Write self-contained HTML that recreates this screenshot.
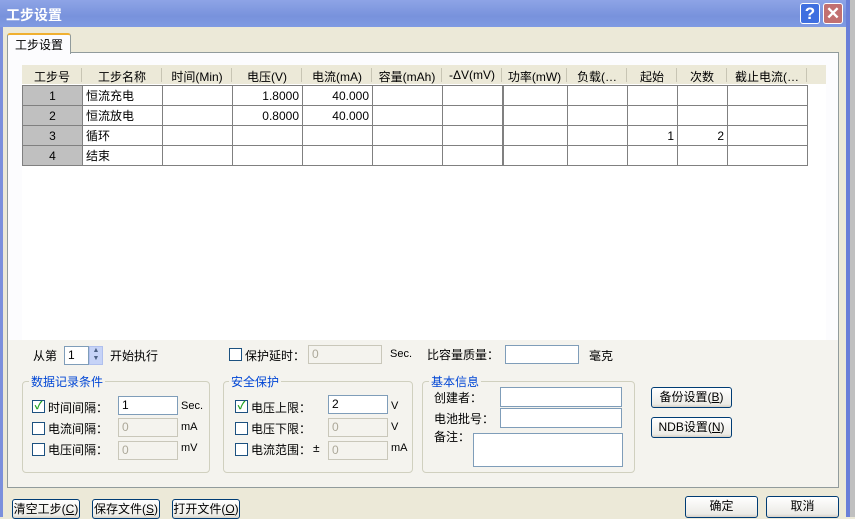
<!DOCTYPE html>
<html><head><meta charset="utf-8"><style>
*{box-sizing:border-box;margin:0;padding:0}
body{width:855px;height:517px;overflow:hidden;background:#ece9d8;font-family:"Liberation Sans","Noto Sans CJK SC","WenQuanYi Zen Hei",sans-serif;font-size:12px;color:#000;position:relative}
.a{position:absolute;white-space:nowrap}
.title{left:0;top:0;width:849px;height:27px;background:linear-gradient(#8ea4e6,#7892dc 60%,#7f9ae2);}
.ttext{left:6px;top:5px;color:#fff;font-size:14px;font-weight:bold}
.tb{width:20px;height:21px;border:1px solid #fff;border-radius:3px;color:#fff;font-weight:bold;text-align:center;font-size:17px;line-height:19px}
.inp{background:#fff;border:1px solid #7f9db9;height:19px;padding-left:3px;line-height:16px}
.dis{background:#f4f3ee;border:1px solid #c9c7ba;color:#aca899}
.cb{width:13px;height:13px;border:1px solid #1c5180;background:#fff}
.grp{border:1px solid #d0d0bf;border-radius:4px}
.gt{color:#0046d5;background:#f4f3ee;padding:0 2px}
.btn{border:1px solid #003c74;border-radius:3px;background:linear-gradient(#fff,#ecebe6 85%,#d6d0c5);text-align:center;line-height:18px}
table{border-collapse:collapse;position:absolute;left:22px;top:85px}
td{border:1px solid #808080;height:20px;padding:0 3px;font-size:12px}
.h{left:22px;top:65px;width:804px;height:20px;background:#ece9d8;border-bottom:1px solid #fff}
.h span{position:absolute;top:3px;text-align:center}
.h i{position:absolute;top:3px;width:1px;height:14px;background:#c8c5b4}
</style></head><body>
<div class="a title"></div>
<div class="a ttext">工步设置</div>
<div class="a tb" style="left:800px;top:3px;background:#3f6fe0">?</div>
<div class="a tb" style="left:823px;top:3px;background:#c27070">✕</div>
<div class="a" style="left:0;top:27px;width:3px;height:490px;background:#7b8fdc"></div>
<div class="a" style="left:846px;top:0;width:4px;height:517px;background:#6a7fd8"></div>
<div class="a" style="left:850px;top:0;width:5px;height:517px;background:#c0c0c0"></div>
<!-- panel -->
<div class="a" style="left:7px;top:52px;width:832px;height:436px;background:#f4f3ee;border:1px solid #919b9c"></div>
<div class="a" style="left:8px;top:53px;width:830px;height:287px;background:#fcfcfe"></div>
<div class="a" style="left:22px;top:65px;width:804px;height:275px;background:#fff"></div>
<div class="a" style="left:7px;top:33px;width:64px;height:21px;background:#fcfcfe;border:1px solid #919b9c;border-bottom:none;border-top:2px solid #f0b030;border-radius:3px 3px 0 0"></div>
<div class="a" style="left:15px;top:36px;font-size:12px">工步设置</div>
<div class="a h">
<span style="left:0;width:60px">工步号</span><i style="left:59px"></i>
<span style="left:60px;width:80px">工步名称</span><i style="left:139px"></i>
<span style="left:140px;width:70px">时间(Min)</span><i style="left:209px"></i>
<span style="left:210px;width:70px">电压(V)</span><i style="left:279px"></i>
<span style="left:280px;width:70px">电流(mA)</span><i style="left:349px"></i>
<span style="left:350px;width:70px">容量(mAh)</span><i style="left:419px"></i>
<span style="left:420px;width:60px">-ΔV(mV)</span><i style="left:479px"></i>
<span style="left:480px;width:65px">功率(mW)</span><i style="left:544px"></i>
<span style="left:545px;width:60px">负载(…</span><i style="left:604px"></i>
<span style="left:605px;width:50px">起始</span><i style="left:654px"></i>
<span style="left:655px;width:50px">次数</span><i style="left:704px"></i>
<span style="left:705px;width:80px">截止电流(…</span><i style="left:784px"></i>
</div>
<table>
<colgroup><col style="width:60px"><col style="width:80px"><col style="width:70px"><col style="width:70px"><col style="width:70px"><col style="width:70px"><col style="width:60px"><col style="width:65px"><col style="width:60px"><col style="width:50px"><col style="width:50px"><col style="width:80px"></colgroup>
<tr><td style="background:#c0c0c0;text-align:center">1</td><td>恒流充电</td><td></td><td style="text-align:right">1.8000</td><td style="text-align:right">40.000</td><td></td><td style="border-right:2px solid #808080"></td><td></td><td></td><td></td><td></td><td></td></tr>
<tr><td style="background:#c0c0c0;text-align:center">2</td><td>恒流放电</td><td></td><td style="text-align:right">0.8000</td><td style="text-align:right">40.000</td><td></td><td style="border-right:2px solid #808080"></td><td></td><td></td><td></td><td></td><td></td></tr>
<tr><td style="background:#c0c0c0;text-align:center">3</td><td>循环</td><td></td><td></td><td></td><td></td><td style="border-right:2px solid #808080"></td><td></td><td></td><td style="text-align:right">1</td><td style="text-align:right">2</td><td></td></tr>
<tr><td style="background:#c0c0c0;text-align:center">4</td><td>结束</td><td></td><td></td><td></td><td></td><td style="border-right:2px solid #808080"></td><td></td><td></td><td></td><td></td><td></td></tr>
</table>
<!-- row controls -->
<div class="a" style="left:33px;top:347px">从第</div>
<div class="a inp" style="left:64px;top:346px;width:25px">1</div>
<div class="a" style="left:89px;top:346px;width:14px;height:19px;background:#c6d3f7;border:1px solid #b0c0ee;font-size:7px;line-height:8px;text-align:center;color:#4d6185">▲<br>▼</div>
<div class="a" style="left:110px;top:347px">开始执行</div>
<div class="a cb" style="left:229px;top:348px"></div>
<div class="a" style="left:245px;top:347px">保护延时：</div>
<div class="a inp dis" style="left:308px;top:345px;width:74px">0</div>
<div class="a" style="left:390px;top:348px;font-size:11px">Sec.</div>
<div class="a" style="left:427px;top:346px">比容量质量：</div>
<div class="a inp" style="left:505px;top:345px;width:74px"></div>
<div class="a" style="left:589px;top:347px">毫克</div>
<!-- groups -->
<div class="a grp" style="left:22px;top:381px;width:188px;height:92px"></div>
<div class="a gt" style="left:29px;top:373px">数据记录条件</div>
<div class="a cb" style="left:32px;top:400px;color:#21a121;font-size:11px;line-height:11px;text-align:center;font-weight:bold">✓</div>
<div class="a" style="left:48px;top:399px">时间间隔：</div>
<div class="a inp" style="left:118px;top:396px;width:60px">1</div>
<div class="a" style="left:181px;top:400px;font-size:11px">Sec.</div>
<div class="a cb" style="left:32px;top:422px"></div>
<div class="a" style="left:48px;top:420px">电流间隔：</div>
<div class="a inp dis" style="left:118px;top:418px;width:60px">0</div>
<div class="a" style="left:181px;top:421px;font-size:11px">mA</div>
<div class="a cb" style="left:32px;top:443px"></div>
<div class="a" style="left:48px;top:441px">电压间隔：</div>
<div class="a inp dis" style="left:118px;top:441px;width:60px">0</div>
<div class="a" style="left:181px;top:442px;font-size:11px">mV</div>

<div class="a grp" style="left:223px;top:381px;width:190px;height:92px"></div>
<div class="a gt" style="left:229px;top:373px">安全保护</div>
<div class="a cb" style="left:235px;top:400px;color:#21a121;font-size:11px;line-height:11px;text-align:center;font-weight:bold">✓</div>
<div class="a" style="left:251px;top:399px">电压上限：</div>
<div class="a inp" style="left:328px;top:395px;width:60px">2</div>
<div class="a" style="left:391px;top:400px;font-size:11px">V</div>
<div class="a cb" style="left:235px;top:422px"></div>
<div class="a" style="left:251px;top:420px">电压下限：</div>
<div class="a inp dis" style="left:328px;top:418px;width:60px">0</div>
<div class="a" style="left:391px;top:421px;font-size:11px">V</div>
<div class="a cb" style="left:235px;top:443px"></div>
<div class="a" style="left:251px;top:441px">电流范围：</div>
<div class="a" style="left:313px;top:441px">±</div>
<div class="a inp dis" style="left:328px;top:441px;width:60px">0</div>
<div class="a" style="left:391px;top:442px;font-size:11px">mA</div>

<div class="a grp" style="left:422px;top:381px;width:213px;height:92px"></div>
<div class="a gt" style="left:429px;top:373px">基本信息</div>
<div class="a" style="left:434px;top:389px">创建者：</div>
<div class="a inp" style="left:500px;top:387px;width:122px;height:20px"></div>
<div class="a" style="left:434px;top:410px">电池批号：</div>
<div class="a inp" style="left:500px;top:408px;width:122px;height:20px"></div>
<div class="a" style="left:434px;top:428px">备注：</div>
<div class="a inp" style="left:473px;top:433px;width:150px;height:34px"></div>

<div class="a btn" style="left:651px;top:387px;width:81px;height:21px">备份设置(<u>B</u>)</div>
<div class="a btn" style="left:651px;top:417px;width:81px;height:21px">NDB设置(<u>N</u>)</div>

<div class="a btn" style="left:12px;top:499px;width:68px;height:20px">清空工步(<u>C</u>)</div>
<div class="a btn" style="left:92px;top:499px;width:68px;height:20px">保存文件(<u>S</u>)</div>
<div class="a btn" style="left:172px;top:499px;width:68px;height:20px">打开文件(<u>O</u>)</div>
<div class="a btn" style="left:685px;top:496px;width:73px;height:22px">确定</div>
<div class="a btn" style="left:766px;top:496px;width:73px;height:22px">取消</div>
</body></html>
